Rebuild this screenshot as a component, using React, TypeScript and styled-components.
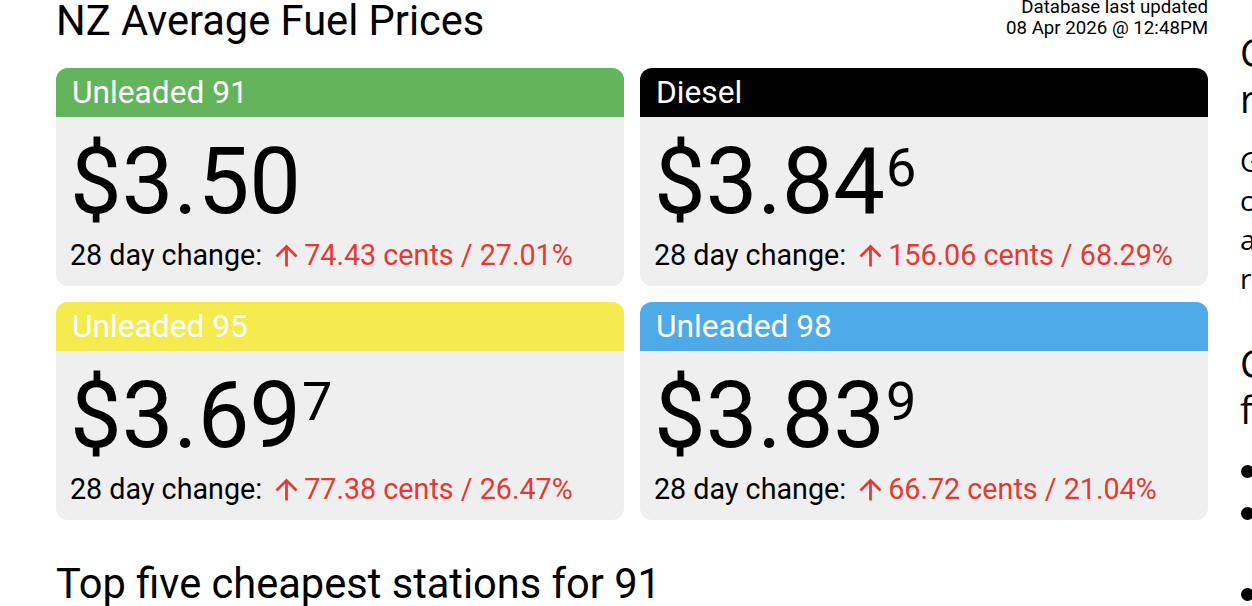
import React from 'react'
import styled, { createGlobalStyle } from 'styled-components'

const GlobalStyle = createGlobalStyle`
  html, body {
    margin: 0;
    padding: 0;
    background: #ffffff;
    overflow: hidden;
  }
  body {
    font-family: Roboto, "Liberation Sans", sans-serif;
    color: #000000;
  }
`

type Fuel = {
  name: string
  colour: string
  dollars: string
  tenth?: string
  cents: string
  percent: string
}

const fuels: Fuel[] = [
  { name: 'Unleaded 91', colour: '#63b45b', dollars: '$3.50', cents: '74.43', percent: '27.01' },
  { name: 'Diesel', colour: '#000000', dollars: '$3.84', tenth: '6', cents: '156.06', percent: '68.29' },
  { name: 'Unleaded 95', colour: '#f5eb4f', dollars: '$3.69', tenth: '7', cents: '77.38', percent: '26.47' },
  { name: 'Unleaded 98', colour: '#4eabe8', dollars: '$3.83', tenth: '9', cents: '66.72', percent: '21.04' },
]

const Page = styled.div`
  display: flex;
  gap: 32px;
  padding-left: 56px;
  width: max-content;
`

const Main = styled.main`
  width: 1152px;
  flex-shrink: 0;
`

const TopRow = styled.header`
  display: flex;
  justify-content: space-between;
  align-items: flex-start;
  margin-bottom: 26px;
`

const Title = styled.h1`
  margin: 0;
  font-size: 41.6px;
  font-weight: 400;
  line-height: 42px;
`

const Updated = styled.div`
  margin-top: -3px;
  font-size: 18.7px;
  line-height: 20.5px;
  text-align: right;
`

const Grid = styled.div`
  display: grid;
  grid-template-columns: 1fr 1fr;
  column-gap: 16px;
  row-gap: 16px;
`

const Card = styled.section`
  border-radius: 12px;
  overflow: hidden;
  background: #efefef;
`

const CardHeader = styled.div<{ $colour: string }>`
  height: 49px;
  padding: 0 16px;
  background: ${(p) => p.$colour};
  color: #ffffff;
  font-size: 31.7px;
  line-height: 49px;
`

const CardBody = styled.div`
  padding: 19px 14px 13px;
`

const Price = styled.div`
  font-size: 92px;
  line-height: 1;
  white-space: nowrap;
`

const Tenth = styled.span`
  display: inline-block;
  vertical-align: top;
  margin-left: 1px;
  font-size: 54px;
  line-height: 1.2;
`

const Change = styled.div`
  margin-top: 10px;
  display: flex;
  align-items: center;
  font-size: 28.7px;
  line-height: 34.8px;
  white-space: nowrap;
`

const Delta = styled.span`
  display: inline-flex;
  align-items: center;
  margin-left: 8px;
  color: #e53935;
`

const Arrow = styled.svg`
  width: 33px;
  height: 33px;
  margin-right: 1px;
  fill: currentColor;
`

const SectionTitle = styled.h2`
  margin: 43px 0 0;
  font-size: 41.6px;
  font-weight: 400;
  line-height: 42px;
`

const Side = styled.aside`
  width: 340px;
  flex-shrink: 0;
  padding-top: 29px;
  font-family: "Open Sans", "Noto Sans", sans-serif;
`

const SideHeading = styled.h3<{ $top?: number }>`
  margin: ${(p) => p.$top ?? 0}px 0 0;
  font-size: 38px;
  font-weight: 400;
  line-height: 46px;
  white-space: nowrap;
`

const SideText = styled.p`
  margin: 20.6px 0 0;
  font-size: 28px;
  line-height: 39px;
  white-space: nowrap;
`

const SideList = styled.ul`
  margin: 20px 0 0;
  padding-left: 34px;
  font-size: 28px;
  line-height: 39px;
`

const SideItem = styled.li`
  white-space: nowrap;

  &::marker {
    font-size: 1.3em;
  }
`

const FuelCard: React.FC<{ fuel: Fuel }> = ({ fuel }) => (
  <Card>
    <CardHeader $colour={fuel.colour}>{fuel.name}</CardHeader>
    <CardBody>
      <Price>
        {fuel.dollars}
        {fuel.tenth && <Tenth>{fuel.tenth}</Tenth>}
      </Price>
      <Change>
        28 day change:
        <Delta>
          <Arrow viewBox="0 0 24 24">
            <path d="M4 12l1.41 1.41L11 7.83V20h2V7.83l5.58 5.59L20 12l-8-8-8 8z" />
          </Arrow>
          {fuel.cents} cents / {fuel.percent}%
        </Delta>
      </Change>
    </CardBody>
  </Card>
)

export default function App() {
  return (
    <>
      <GlobalStyle />
      <Page>
        <Main>
          <TopRow>
            <Title>NZ Average Fuel Prices</Title>
            <Updated>
              Database last updated
              <br />
              08 Apr 2026 @ 12:48PM
            </Updated>
          </TopRow>
          <Grid>
            {fuels.map((fuel) => (
              <FuelCard key={fuel.name} fuel={fuel} />
            ))}
          </Grid>
          <SectionTitle>Top five cheapest stations for 91</SectionTitle>
        </Main>
        <Side>
          <SideHeading>
            Compare
            <br />
            regions
          </SideHeading>
          <SideText>
            Get the latest prices
            <br />
            compared across
            <br />
            all of the main
            <br />
            regions in New Zealand.
          </SideText>
          <SideHeading $top={42.7}>
            Cheapest stations
            <br />
            for your area
          </SideHeading>
          <SideList>
            <SideItem>Auckland</SideItem>
            <SideItem>
              Wellington
              <br />
              and the Hutt Valley
            </SideItem>
            <SideItem>Christchurch</SideItem>
          </SideList>
        </Side>
      </Page>
    </>
  )
}
